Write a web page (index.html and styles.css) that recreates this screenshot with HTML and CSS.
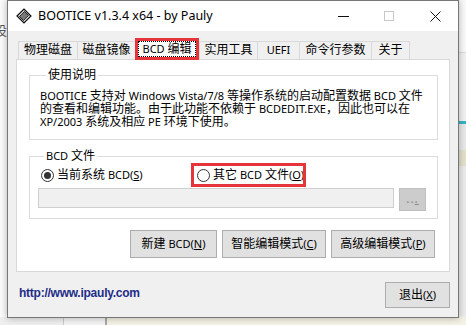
FILE: index.html
```html
<html>
 <head>
	<meta charset="UTF-8">
	<title>BOOTICE</title>
	<link rel="stylesheet" href="styles.css">
 </head>
 <body>
 <span class="desk-char">设</span>
 <div class="window">
	<!-- 标题栏 -->
	<div class="titlebar">
		<svg class="app-icon" width="16" height="16" viewBox="0 0 16 16">
			<path d="M1 8 L8 1 L15 8 L8 15 Z" fill="#d8d8d8" stroke="#111" stroke-width="1.2"/>
			<path d="M3.5 8.5 L8.5 3.5 L12.5 7.5 L7.5 12.5 Z" fill="#777" stroke="#111" stroke-width="0.8"/>
			<path d="M2.5 9.5 L6.5 13.5" stroke="#111" stroke-width="1"/>
		</svg>
		<span class="title">BOOTICE v1.3.4 x64 - by Pauly</span>
		<div class="caps">
			<div class="cap"><span class="cap-min"></span></div>
			<div class="cap"><span class="cap-max"></span></div>
			<div class="cap">
				<svg width="11" height="11" viewBox="0 0 11 11"><path d="M0.5 0.5 L10.5 10.5 M10.5 0.5 L0.5 10.5" stroke="#111" stroke-width="1"/></svg>
			</div>
		</div>
	</div>

	<div class="client">
		<!-- 选项卡 -->
		<div class="tabs">
			<div class="tab w1">物理磁盘</div>
			<div class="tab w2">磁盘镜像</div>
			<div class="tab tab-on"><span class="focus"><span class="en">BCD </span>编辑</span></div>
			<div class="tab w4">实用工具</div>
			<div class="tab w5 en">UEFI</div>
			<div class="tab w6">命令行参数</div>
			<div class="tab w7 last">关于</div>
		</div>

		<div class="panel">
			<fieldset class="group g-info">
				<legend>使用说明</legend>
				<p class="info"><span class="en">BOOTICE </span>支持对<span class="en"> Windows Vista/7/8 </span>等操作系统的启动配置数据<span class="en"> BCD </span>文件<br>的查看和编辑功能。由于此功能不依赖于<span class="en"> BCDEDIT.EXE</span>，因此也可以在<br><span class="en">XP/2003 </span>系统及相应<span class="en"> PE </span>环境下使用。</p>
			</fieldset>

			<fieldset class="group g-file">
				<legend><span class="en">BCD </span>文件</legend>
				<div class="radios">
					<label class="radio r1"><span class="dot on"></span>当前系统<span class="en"> BCD(<u>S</u>)</span></label>
					<label class="radio r2 mark"><span class="dot"></span>其它<span class="en"> BCD </span>文件<span class="en">(<u>O</u>)</span></label>
				</div>
				<div class="path-row">
					<div class="path"></div>
					<div class="browse">..<u>.</u></div>
				</div>
			</fieldset>

			<div class="actions">
				<button class="btn b-new">新建<span class="en"> BCD(<u>N</u>)</span></button>
				<button class="btn b-mode">智能编辑模式<span class="en">(<u>C</u>)</span></button>
				<button class="btn b-mode">高级编辑模式<span class="en">(<u>P</u>)</span></button>
			</div>
		</div>

		<div class="footer">
			<span class="link">http://www.ipauly.com</span>
			<button class="btn b-exit">退出<span class="en">(<u>X</u>)</span></button>
		</div>
	</div>
 </div>
 </body>
</html>
```

FILE: styles.css
```css
	*{margin:0;padding:0;box-sizing:border-box;}
	body{ /* 桌面背景 */
		width:466px;
		height:325px;
		overflow:hidden;
		position:relative;
		font-family:"Noto Sans","Noto Sans CJK SC",sans-serif;
		font-size:12px;
		color:#000;
		background:
			linear-gradient(to right,#efefef 0 63px,#c9c9c9 63px 64px,#f3f3f3 64px 105px,#a9a9a9 105px 107px,#f4f2e4 107px) left bottom / 100% 8px no-repeat,
			linear-gradient(#fafafa 0 52px,#dcdcdc 52px 53px,#f2f2f2 53px 121px,#35b7c9 121px 124px,#e9e9e9 124px 150px,#e4e1cc 150px 166px,#ececec 166px) right top / 8px 100% no-repeat,
			#fbfbfb;
	}
	.desk-char{
		position:absolute;
		left:-6px;
		top:20px;
		font-size:13px;
		color:#555;
	}
	.en{ font-size:11px; } /* 雅黑里的英文字母偏小 */

	.window{
		width:452px;
		height:318px;
		margin-left:7px;
		border:1px solid #777;
		box-shadow:0 0 7px rgba(0,0,0,0.3);
		display:flex;
		flex-direction:column;
		background:#f0f0f0;
	}

	/* 标题栏 */
	.titlebar{
		height:30px;
		background:#fff;
		display:flex;
		align-items:center;
		padding-left:8px;
	}
	.app-icon{ margin-right:6px; }
	.title{
		font-size:12.5px;
		line-height:16px;
		flex:1;
	}
	.caps{ display:flex; height:30px; }
	.cap{
		width:46px;
		height:30px;
		display:flex;
		align-items:center;
		justify-content:center;
	}
	.cap-min{ width:11px; height:1px; background:#111; }
	.cap-max{ width:10px; height:10px; border:1px solid #c8c8c8; }

	.client{
		flex:1;
		display:flex;
		flex-direction:column;
		padding:7px 8px 0 8px;
	}

	/* 选项卡 */
	.tabs{
		height:21px;
		display:flex;
		align-items:flex-end;
		padding-left:2px;
		position:relative;
		z-index:1;
	}
	.tab{
		height:18px;
		line-height:16px;
		text-align:center;
		white-space:nowrap;
		border:1px solid #d9d9d9;
		border-right:none;
		border-bottom:none;
		background:#f0f0f0;
	}
	.tab.last{ border-right:1px solid #d9d9d9; }
	.w1{ width:59px; }
	.w2{ width:58px; }
	.w4{ width:58px; }
	.w5{ width:42px; }
	.w6{ width:72px; }
	.w7{ width:39px; }
	.tab-on{
		width:64px;
		height:22px;
		margin-bottom:-1px;
		background:#fff;
		border-right:1px solid #d9d9d9;
		display:flex;
		align-items:center;
		justify-content:center;
		outline:3px solid #e5343a;
		outline-offset:-3px;
	}
	.focus{
		border:1px dotted #000;
		padding:0 3px;
		line-height:14px;
		margin-top:-2px;
	}

	.panel{
		height:213px;
		background:#fff;
		border:1px solid #d9d9d9;
		padding:8px 11px 0 12px;
	}

	/* 分组框 */
	.group{
		border:1px solid #dcdcdc;
	}
	.group legend{
		margin-left:6px;
		padding:0 2px;
		line-height:14px;
	}
	.g-info{ padding:7px 8px 11px 10px; }
	.info{ line-height:13px; white-space:nowrap; }

	.g-file{
		margin-top:9px;
		padding:3px 10px 7px 8px;
	}
	.radios{ display:flex; height:18px; align-items:center; }
	.radio{
		display:flex;
		align-items:center;
		height:18px;
		line-height:18px;
		white-space:pre;
	}
	.r1{ margin-left:3px; width:153px; }
	.r2{ padding-left:3px; width:109px; }
	.mark{ outline:3px solid #e5343a; }
	.dot{
		flex:none;
		width:13px;
		height:13px;
		border:1px solid #333;
		border-radius:50%;
		background:#fff;
		margin-right:3px;
		display:flex;
		align-items:center;
		justify-content:center;
	}
	.dot.on::after{
		content:"";
		width:7px;
		height:7px;
		border-radius:50%;
		background:#333;
	}
	.path-row{
		display:flex;
		align-items:flex-start;
		margin-top:4px;
		gap:5px;
	}
	.path{
		width:356px;
		height:20px;
		background:#f0f0f0;
		border:1px solid #cfcfcf;
	}
	.browse{
		width:27px;
		height:23px;
		background:#cccccc;
		border:1px solid #bfbfbf;
		color:#8a8a8a;
		text-align:center;
		line-height:19px;
		letter-spacing:1px;
	}

	/* 按钮 */
	.btn{
		font-family:"Noto Sans","Noto Sans CJK SC",sans-serif;
		font-size:12px;
		color:#000;
		background:#e1e1e1;
		border:1px solid #adadad;
		height:28px;
		line-height:16px;
		white-space:pre;
	}
	.actions{
		display:flex;
		justify-content:flex-end;
		gap:5px;
		margin:11px 3px 0 0;
	}
	.b-new{ width:87px; }
	.b-mode{ width:104px; }

	.footer{
		display:flex;
		justify-content:space-between;
		align-items:flex-start;
		padding-top:10px;
	}
	.link{
		margin:4px 0 0 3px;
		font-family:"Liberation Sans",Arial,sans-serif;
		font-weight:bold;
		font-size:12px;
		letter-spacing:-0.25px;
		color:#222c88;
	}
	.b-exit{ width:65px; height:26px; }
```
